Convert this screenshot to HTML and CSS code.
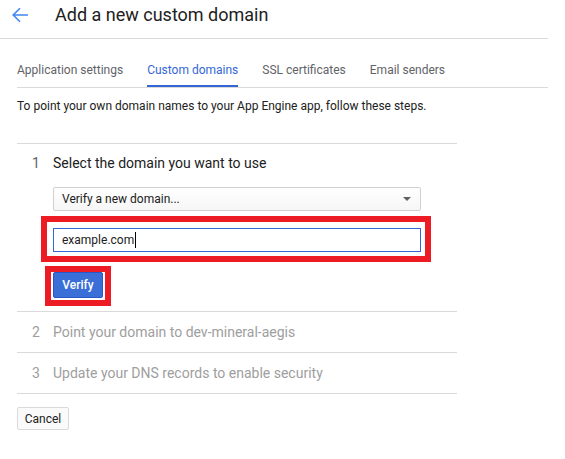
FILE: index.html
```html
<!DOCTYPE html>
<html>
<head>
<meta charset="utf-8">
<link rel="stylesheet" href="styles.css">
</head>
<body>
<header class="topbar">
  <svg class="back" width="18" height="18" viewBox="0 0 18 18"><path d="M17 9H2.5M9 2.2L2.2 9L9 15.8" fill="none" stroke="#4285f4" stroke-width="1.6"/></svg>
  <h1 class="title">Add a new custom domain</h1>
</header>
<main class="content">
  <nav class="tabs">
    <span class="tab">Application settings</span>
    <span class="tab active">Custom domains</span>
    <span class="tab">SSL certificates</span>
    <span class="tab">Email senders</span>
  </nav>
  <p class="intro">To point your own domain names to your App Engine app, follow these steps.</p>
  <section class="steps">
    <div class="step current">
      <div class="step-head"><span class="num">1</span><span class="step-title">Select the domain you want to use</span></div>
      <div class="step-body">
        <div class="select"><span>Verify a new domain...</span><span class="caret"></span></div>
        <div class="field-wrap">
          <div class="input"><span>example.com</span><span class="cursor"></span></div>
          <div class="mark mark-input"></div>
        </div>
        <div class="btn-wrap">
          <button class="btn-primary">Verify</button>
          <div class="mark mark-btn"></div>
        </div>
      </div>
    </div>
    <div class="step"><div class="step-head"><span class="num">2</span><span class="step-title">Point your domain to dev-mineral-aegis</span></div></div>
    <div class="step"><div class="step-head"><span class="num">3</span><span class="step-title">Update your DNS records to enable security</span></div></div>
  </section>
  <button class="btn-cancel">Cancel</button>
</main>
</body>
</html>
```
FILE: styles.css
```css
* { box-sizing: border-box; }
body { margin: 0; font-family: Roboto, "Liberation Sans", Arial, sans-serif; color: #212121; background: #fff; }
.topbar { width: 548px; height: 39px; border-bottom: 1px solid #dadada; display: flex; align-items: center; padding-left: 11px; padding-bottom: 9px; }
.back { display: block; }
.title { margin: 0 0 0 26px; font-size: 18px; font-weight: 400; line-height: 24px; color: #212121; }
.content { padding-left: 17px; width: 548px; }
.tabs { display: flex; gap: 24px; height: 49px; align-items: flex-end; border-bottom: 1px solid #dadada; }
.tab { font-size: 12px; line-height: 16px; color: #5f6368; padding-bottom: 7px; border-bottom: 2px solid transparent; }
.tab.active { color: #3367d6; border-bottom-color: #3367d6; }
.intro { margin: 10px 0 0; font-size: 12px; line-height: 16px; color: #212121; }
.steps { width: 440px; margin-top: 29px; border-top: 1px solid #dadada; }
.step { border-bottom: 1px solid #dadada; }
.step-head { display: flex; align-items: center; height: 40px; padding-left: 15px; font-size: 14px; color: #9e9e9e; }
.num { width: 21px; }
.current .step-head { height: auto; padding-top: 9px; line-height: 20px; color: #212121; }
.current .num { color: #5f6368; }
.step-body { padding: 14px 0 13px 36px; }
.select { width: 368px; height: 24px; border: 1px solid #d0d0d0; border-radius: 2px; background: linear-gradient(#ffffff, #f6f6f6); display: flex; align-items: center; justify-content: space-between; padding: 0 9px 0 8px; font-size: 12px; }
.caret { width: 0; height: 0; border-left: 4px solid transparent; border-right: 4px solid transparent; border-top: 4px solid #616161; }
.field-wrap { position: relative; margin-top: 17px; width: 368px; }
.input { height: 24px; border: 1px solid #3367d6; display: flex; align-items: center; padding-left: 8px; font-size: 12px; }
.cursor { display: inline-block; width: 1px; height: 16px; background: #000; margin-left: 1px; }
.mark { position: absolute; border: 6px solid #ed1c24; }
.mark-input { left: -12px; right: -10px; top: -12px; bottom: -10px; }
.btn-wrap { position: relative; margin-top: 20px; width: 50px; }
.btn-primary { display: block; width: 50px; height: 26px; border: 1px solid #2a56c6; border-radius: 2px; background: #3b6fd8; color: #fff; font-family: inherit; font-size: 12px; font-weight: 500; padding: 0; }
.mark-btn { left: -8px; right: -8px; top: -6px; bottom: -8px; }
.btn-cancel { display: block; margin-top: 13px; width: 52px; height: 23px; border: 1px solid #dadada; border-radius: 2px; background: #fafafa; font-family: inherit; font-size: 12px; color: #212121; padding: 0; }
```
